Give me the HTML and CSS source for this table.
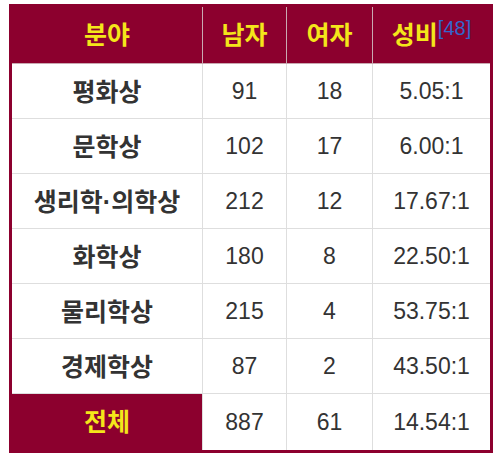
FILE: index.html
```html
<!DOCTYPE html>
<html lang="ko">
<head>
<meta charset="utf-8">
<link rel="stylesheet" href="styles.css">
</head>
<body>
<table class="stats">
  <colgroup>
    <col class="c1"><col class="c2"><col class="c3"><col class="c4">
  </colgroup>
  <thead>
    <tr class="head">
      <th>분야</th><th>남자</th><th>여자</th><th>성비<sup class="ref">[48]</sup></th>
    </tr>
  </thead>
  <tbody>
    <tr><th class="field">평화상</th><td>91</td><td>18</td><td>5.05:1</td></tr>
    <tr><th class="field">문학상</th><td>102</td><td>17</td><td>6.00:1</td></tr>
    <tr><th class="field">생리학·의학상</th><td>212</td><td>12</td><td>17.67:1</td></tr>
    <tr><th class="field">화학상</th><td>180</td><td>8</td><td>22.50:1</td></tr>
    <tr><th class="field">물리학상</th><td>215</td><td>4</td><td>53.75:1</td></tr>
    <tr><th class="field">경제학상</th><td>87</td><td>2</td><td>43.50:1</td></tr>
    <tr class="total"><th class="sum">전체</th><td>887</td><td>61</td><td>14.54:1</td></tr>
  </tbody>
</table>
</body>
</html>
```
FILE: styles.css
```css
html, body {
  margin: 0;
  padding: 0;
  background: #ffffff;
}

.stats {
  margin: 4px 0 0 9px;
  width: 484px;
  table-layout: fixed;
  border-collapse: separate;
  border-spacing: 0;
  border: 3px solid #8c002e;
  font-family: "Liberation Sans", "Noto Sans CJK KR", sans-serif;
  font-size: 23px;
  color: #333333;
}

.c1 { width: 191px; }
.c2 { width: 84px; }
.c3 { width: 86px; }
.c4 { width: 117px; }

.stats th,
.stats td {
  padding: 0;
  text-align: center;
  vertical-align: middle;
  border-right: 1px solid #dedede;
  border-bottom: 1px solid #dedede;
  font-weight: normal;
  line-height: 1.2;
}

.stats td {
  padding-top: 2px;
}

.stats th:last-child,
.stats td:last-child {
  border-right: none;
}

.stats tr { height: 55px; }
.stats tr.head { height: 57px; }
.stats tr.total { height: 56px; }

.stats tr.total th,
.stats tr.total td {
  border-bottom: none;
}

.head th {
  background: #8c002e;
  color: #f4e61a;
  font-weight: bold;
  font-size: 25px;
  border-right-color: #c9a9b1;
  border-bottom-color: #c9a9b1;
}

.field {
  font-weight: bold !important;
  font-size: 25px;
  color: #333333;
  padding-top: 2px !important;
}

.sum {
  background: #8c002e;
  color: #f4e61a;
  font-weight: bold !important;
  font-size: 25px;
}

.ref {
  color: #3366cc;
  font-weight: normal;
  font-size: 20px;
  vertical-align: super;
  line-height: 0;
}
```
